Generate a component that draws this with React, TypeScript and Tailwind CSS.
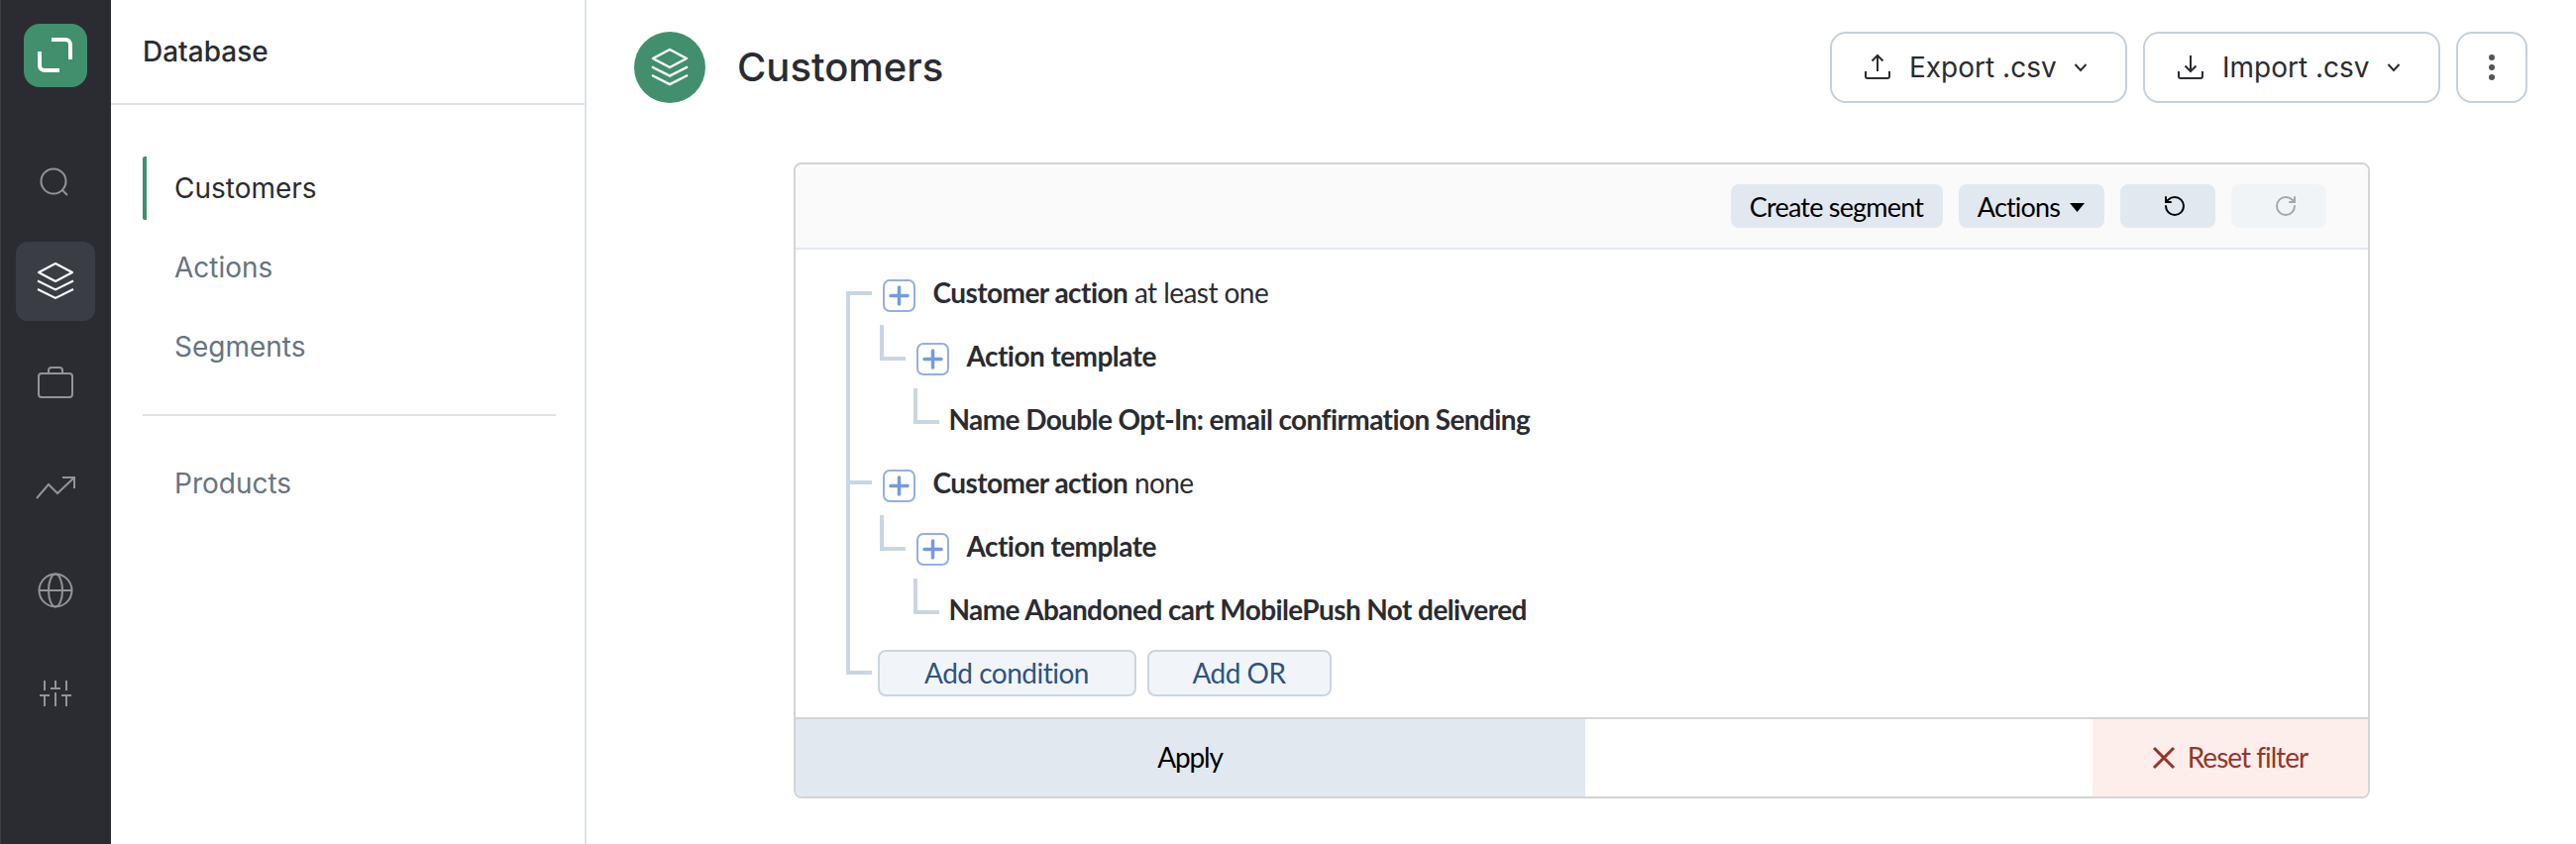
import React from "react";
import { RotateCcw, RotateCw } from "lucide-react";

const pt = "font-['Lato','Noto_Sans',sans-serif]";

// левая тёмная колонка
const LayersIcon = ({ size = 48, stroke = 2 }: { size?: number; stroke?: number }) => (
  <svg width={size} height={size} viewBox="0 0 48 48" fill="none" stroke="currentColor" strokeWidth={stroke}>
    <path d="M24 6 41 15 24 24 7 15Z" strokeLinejoin="round" />
    <path d="M6 23.5 24 32.5 42 23.5" />
    <path d="M6 32 24 41 42 32" />
  </svg>
);

const railIcons: React.ReactNode[] = [
  <>
    <circle cx="22" cy="27" r="12.5" />
    <path d="M31 36l5 5" />
  </>,
  null,
  <>
    <rect x="7" y="13" width="34" height="24" rx="3" />
    <path d="M17 13v-3a3 3 0 0 1 3-3h8a3 3 0 0 1 3 3v3" />
  </>,
  <>
    <path d="M5 35 17 21l9 9L43 14" />
    <path d="M31 14h12v11" />
  </>,
  <>
    <circle cx="24" cy="24" r="16.5" />
    <ellipse cx="24" cy="24" rx="7" ry="16.5" />
    <path d="M7.5 24h33" />
  </>,
  <>
    <path d="M13 11v10M8 26h10M13 26v11" />
    <path d="M24 11v8M19 19h10M24 23v14" />
    <path d="M35 11v10M30 26h10M35 26v11" />
  </>,
];

const Rail = () => (
  <div className="flex w-[112px] shrink-0 flex-col items-center bg-[#2a2c31] pt-6 shadow-[inset_1px_0_0_#3c3f44]">
    <div className="flex h-16 w-16 items-center justify-center rounded-2xl bg-[#428f6d]">
      <svg width="64" height="64" viewBox="0 0 64 64" fill="none" stroke="#fff" strokeWidth="4">
        <path d="M28 16h14a5 5 0 0 1 5 5v15" />
        <path d="M16 28v14a5 5 0 0 0 5 5h15" />
      </svg>
    </div>
    <div className="mt-[52px] flex flex-col gap-6">
      {railIcons.map((icon, i) =>
        icon === null ? (
          <div key={i} className="flex h-20 w-20 items-center justify-center rounded-xl bg-[#3a3e44] text-white">
            <LayersIcon />
          </div>
        ) : (
          <div key={i} className="flex h-20 w-20 items-center justify-center text-[#929497]">
            <svg width="48" height="48" viewBox="0 0 48 48" fill="none" stroke="currentColor" strokeWidth="2">
              {icon}
            </svg>
          </div>
        )
      )}
    </div>
  </div>
);

const Sidebar = () => (
  <div className="w-[480px] shrink-0 border-r-2 border-[#dde3e8] bg-white">
    <div className="flex h-[106px] items-center border-b-2 border-[#dde3e8] pb-[1px] pl-[32px] text-[28px] font-medium text-[#2a2c31]">
      Database
    </div>
    <div className="pl-8 pr-[29px] pt-[52px]">
      <div className="flex h-16 items-center rounded-[2px] border-l-4 border-[#428f6d] pl-[28px] text-[28px] text-[#2a2c31]">
        Customers
      </div>
      <div className="mt-4 flex h-16 items-center pl-[32px] text-[28px] text-[#66747f]">Actions</div>
      <div className="mt-4 flex h-16 items-center pl-[32px] text-[28px] text-[#66747f]">Segments</div>
      <div className="mt-[36px] border-t-2 border-[#dde3e8]" />
      <div className="mt-[36px] flex h-16 items-center pl-[32px] text-[28px] text-[#66747f]">Products</div>
    </div>
  </div>
);

const Chevron = () => (
  <svg width="16" height="16" viewBox="0 0 16 16" fill="none" stroke="#2a2c31" strokeWidth="2">
    <path d="M2.5 5 8 11l5.5-6" />
  </svg>
);

const HeaderButton = ({ label, up }: { label: string; up: boolean }) => (
  <button className="flex h-[72px] w-[300px] items-center gap-4 rounded-2xl border-2 border-[#c5d0da] bg-white pl-[30px] text-[28px] text-[#2a2c31]">
    <svg width="32" height="32" viewBox="0 0 32 32" fill="none" stroke="#2a2c31" strokeWidth="2">
      <path d={up ? "M16 4v16M10.500 9.500 16 4l5.500 5.500" : "M16 4v16M10.500 14.500 16 20l5.500-5.500"} />
      <path d="M4 20v5a2 2 0 0 0 2 2h20a2 2 0 0 0 2-2v-5" />
    </svg>
    <span>{label}</span>
    <Chevron />
  </button>
);

const PlusBox = () => (
  <div className="flex h-[33px] w-[33px] shrink-0 items-center justify-center rounded-[7px] border-2 border-[#94aee5] bg-white">
    <svg width="21" height="21" viewBox="0 0 21 21" stroke="#769ade" strokeWidth="3.500" strokeLinecap="round">
      <path d="M10.500 2v17M2 10.500h17" />
    </svg>
  </div>
);

const Elbow = ({ left }: { left: string }) => (
  <div className={`absolute -top-[2px] h-[36px] w-[26px] border-b-4 border-l-4 border-[#c9d6e2] ${left}`} />
);

const Tick = ({ top }: { top: string }) => (
  <div className={`absolute -left-[37px] w-[26px] border-t-4 border-[#c9d6e2] ${top}`} />
);

const TreeGroup = ({ rest, name, first }: { rest: string; name: string; first?: boolean }) => (
  <>
    <div className="relative ml-[88px] flex h-16 items-center gap-[18px]">
      <Tick top={first ? "top-[28px]" : "top-[27px]"} />
      <PlusBox />
      <div className="-mt-[6px] text-[28px] tracking-[-0.55px] text-[#2a2c31]">
        <b>Customer action</b> {rest}
      </div>
    </div>
    <div className="relative ml-[122px] flex h-16 items-center gap-[18px]">
      <Elbow left="-left-[37px]" />
      <PlusBox />
      <div className="-mt-[6px] text-[28px] font-bold tracking-[-0.55px] text-[#2a2c31]">Action template</div>
    </div>
    <div className="relative ml-[155px] flex h-16 items-center">
      <Elbow left="-left-[36px]" />
      <div className="-mt-[6px] text-[28px] font-bold tracking-[-0.6px] text-[#2a2c31]">{name}</div>
    </div>
  </>
);

const Panel = () => (
  <div className={`mx-auto mt-[60px] w-[1591px] overflow-hidden rounded-lg border-2 border-[#d4d4d4] bg-white ${pt}`}>
    <div className="flex h-[86px] items-center justify-end gap-4 border-b-2 border-[#e2e8f0] bg-[#fafafa] pr-[42px] text-[27px] tracking-[-0.8px] text-black">
      <button className="flex h-11 w-[214px] items-center justify-center rounded-lg bg-[#e2e8f0] pt-[3px]">Create segment</button>
      <button className="flex h-11 w-[147px] items-center justify-center gap-[10px] rounded-lg bg-[#e2e8f0] pt-[3px]">
        Actions
        <svg width="15" height="9" viewBox="0 0 15 9" fill="#000">
          <path d="M0 0h15L7.500 9Z" />
        </svg>
      </button>
      <button className="flex h-11 w-24 items-center justify-center rounded-lg bg-[#e2e8f0] pl-[14px]">
        <RotateCcw size={24} color="#000" strokeWidth={2} />
      </button>
      <button className="flex h-11 w-24 items-center justify-center rounded-lg bg-[#f1f4f6] pl-[14px]">
        <RotateCw size={24} color="#a6a6a6" strokeWidth={2} />
      </button>
    </div>
    <div className="relative h-[472px] pt-[14px]">
      <div className="absolute left-[51px] top-[42px] h-[387px] w-1 bg-[#c9d6e2]" />
      <TreeGroup first rest="at least one" name="Name Double Opt-In: email confirmation Sending" />
      <TreeGroup rest="none" name="Name Abandoned cart MobilePush Not delivered" />
      <div className="relative ml-[83px] flex h-16 items-start gap-[11px] pt-[6px]">
        <div className="absolute -left-[32px] top-[27px] w-[26px] border-t-4 border-[#c9d6e2]" />
        <button className="h-[47px] w-[261px] rounded-lg border-2 border-[#cbd5e0] bg-[#f1f5f9] pb-[2px] text-[28px] tracking-[-0.5px] text-[#2f5380]">
          Add condition
        </button>
        <button className="h-[47px] w-[186px] rounded-lg border-2 border-[#cbd5e0] bg-[#f1f5f9] pb-[2px] text-[28px] tracking-[-0.5px] text-[#2f5380]">
          Add OR
        </button>
      </div>
    </div>
    <div className="flex h-[80px] border-t-2 border-[#d4d4d4] text-[28px]">
      <button className="flex w-[797px] items-center justify-center bg-[#e2e8f0] pb-[3px] tracking-[-1.2px] text-black">Apply</button>
      <div className="flex-1" />
      <button className="flex w-[278px] items-center justify-center gap-[12px] bg-[#fdeeeb] pb-[3px] tracking-[-1px] text-[#96352a]">
        <svg width="24" height="24" viewBox="0 0 24 24" stroke="#96352a" strokeWidth="3" className="mt-[3px]">
          <path d="M2 2l20 20M22 2 2 22" />
        </svg>
        Reset filter
      </button>
    </div>
  </div>
);

export default function App() {
  return (
    <div className="flex h-[852px] w-[2600px] overflow-hidden bg-white font-['Inter',sans-serif]">
      <Rail />
      <Sidebar />
      <div className="min-w-0 flex-1">
        <div className="flex items-center pl-[48px] pr-[49px] pt-8">
          <div className="flex h-[72px] w-[72px] items-center justify-center rounded-full bg-[#428f6d] text-white">
            <LayersIcon stroke={2.5} />
          </div>
          <h1 className="ml-8 text-[40px] font-medium text-[#2a2c31]">Customers</h1>
          <div className="ml-auto flex gap-4">
            <HeaderButton label="Export .csv" up />
            <HeaderButton label="Import .csv" up={false} />
            <button className="flex h-[72px] w-[72px] items-center justify-center rounded-2xl border-2 border-[#c5d0da] bg-white">
              <svg width="8" height="28" viewBox="0 0 8 28" fill="#555">
                <circle cx="4" cy="4" r="3" />
                <circle cx="4" cy="14" r="3" />
                <circle cx="4" cy="24" r="3" />
              </svg>
            </button>
          </div>
        </div>
        <Panel />
      </div>
    </div>
  );
}
